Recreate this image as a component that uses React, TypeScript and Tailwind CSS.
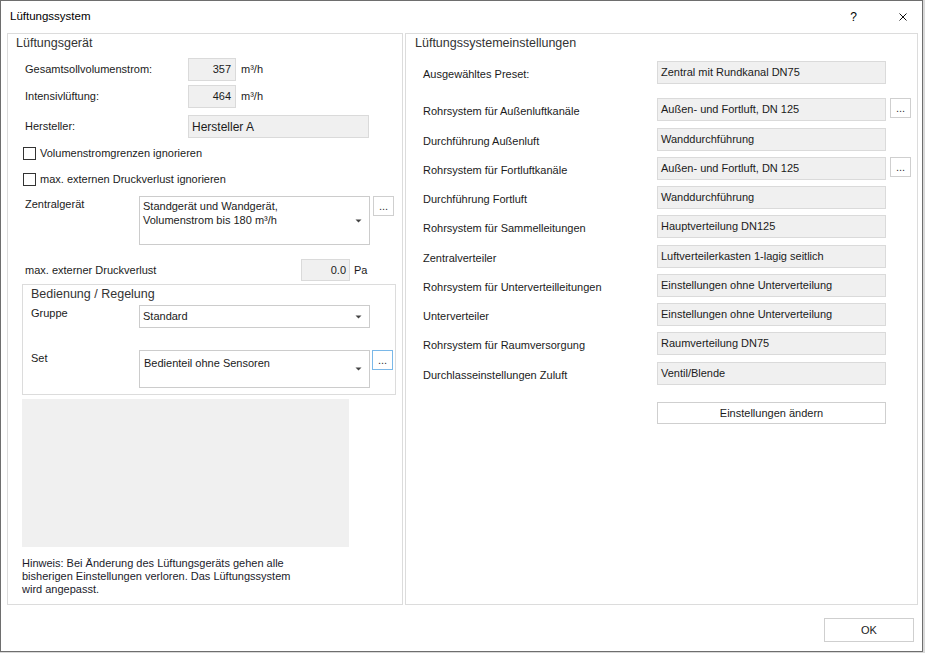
import React from 'react';

const font = "font-['Liberation_Sans',Arial,sans-serif]";

type Row = {
  label: string;
  value: string;
  dots?: boolean;
  mt: string;
};

const settingRows: Row[] = [
  { label: 'Ausgewähltes Preset:', value: 'Zentral mit Rundkanal DN75', mt: 'mt-[10px]' },
  { label: 'Rohrsystem für Außenluftkanäle', value: 'Außen- und Fortluft, DN 125', dots: true, mt: 'mt-[14px]' },
  { label: 'Durchführung Außenluft', value: 'Wanddurchführung', mt: 'mt-[7px]' },
  { label: 'Rohrsystem für Fortluftkanäle', value: 'Außen- und Fortluft, DN 125', dots: true, mt: 'mt-[6px]' },
  { label: 'Durchführung Fortluft', value: 'Wanddurchführung', mt: 'mt-[6px]' },
  { label: 'Rohrsystem für Sammelleitungen', value: 'Hauptverteilung DN125', mt: 'mt-[6px]' },
  { label: 'Zentralverteiler', value: 'Luftverteilerkasten 1-lagig seitlich', mt: 'mt-[7px]' },
  { label: 'Rohrsystem für Unterverteilleitungen', value: 'Einstellungen ohne Unterverteilung', mt: 'mt-[6px]' },
  { label: 'Unterverteiler', value: 'Einstellungen ohne Unterverteilung', mt: 'mt-[6px]' },
  { label: 'Rohrsystem für Raumversorgung', value: 'Raumverteilung DN75', mt: 'mt-[6px]' },
  { label: 'Durchlasseinstellungen Zuluft', value: 'Ventil/Blende', mt: 'mt-[7px]' },
];

function Arrow() {
  return (
    <svg width="7" height="4" viewBox="0 0 7 4" className="shrink-0">
      <polygon points="0.5,0.5 6.5,0.5 3.5,3.5" fill="#444" />
    </svg>
  );
}

function DotsButton({ focused }: { focused?: boolean }) {
  return (
    <div
      className={
        focused
          ? 'flex h-[20px] w-[21px] shrink-0 items-end justify-center border border-[#7ab8e8] bg-white pb-[3px] text-[11px] leading-none text-[#333]'
          : 'flex h-[20px] w-[21px] shrink-0 items-end justify-center border border-[#cfcfcf] bg-white pb-[3px] text-[11px] leading-none text-[#333]'
      }
    >
      ...
    </div>
  );
}

function Checkbox({ label, mt }: { label: string; mt: string }) {
  return (
    <div className={`ml-[15px] flex h-[14px] items-center ${mt}`}>
      <div className="h-[13px] w-[13px] border border-[#333] bg-white" />
      <span className="ml-[4px] text-[11px] leading-[14px] text-[#1b1b1b]">{label}</span>
    </div>
  );
}

function ValueField({ value, width }: { value: string; width: string }) {
  return (
    <div
      className={`flex h-[23px] ${width} items-center justify-end border border-[#dadada] bg-[#f0f0f0] pr-[4px] text-[11px] text-[#1b1b1b]`}
    >
      {value}
    </div>
  );
}

export default function App() {
  return (
    <div className={`h-[653px] w-[925px] bg-[#d9d9d9] ${font}`}>
      <div className="flex h-[652px] w-[923px] flex-col border border-[#6e6e6e] bg-white">
        {/* Title bar */}
        <div className="flex h-[31px] shrink-0 items-center pl-[9px] pr-[15px]">
          <span className="text-[11.5px] text-black">Lüftungssystem</span>
          <span className="ml-auto text-[12px] text-black">?</span>
          <svg width="8" height="8" viewBox="0 0 8 8" className="ml-[42px]">
            <path d="M0.5 0.5 L7.5 7.5 M7.5 0.5 L0.5 7.5" stroke="#111" strokeWidth="1" />
          </svg>
        </div>

        <div className="mt-[1px] flex gap-[2px] pl-[6px]">
          {/* Left group */}
          <div className="flex h-[572px] w-[396px] flex-col border border-[#dcdcdc]">
            <div className="ml-[8px] mt-[2px] h-[15px] text-[12.5px] leading-[15px] text-[#333]">
              Lüftungsgerät
            </div>

            <div className="ml-[17px] mt-[7px] flex items-center">
              <span className="w-[163px] text-[11px] text-[#1b1b1b]">Gesamtsollvolumenstrom:</span>
              <ValueField value="357" width="w-[48px]" />
              <span className="ml-[5px] text-[11px] text-[#1b1b1b]">m³/h</span>
            </div>
            <div className="ml-[17px] mt-[4px] flex items-center">
              <span className="w-[163px] text-[11px] text-[#1b1b1b]">Intensivlüftung:</span>
              <ValueField value="464" width="w-[48px]" />
              <span className="ml-[5px] text-[11px] text-[#1b1b1b]">m³/h</span>
            </div>
            <div className="ml-[17px] mt-[7px] flex items-center">
              <span className="w-[163px] text-[11px] text-[#1b1b1b]">Hersteller:</span>
              <div className="flex h-[23px] w-[181px] items-center border border-[#dadada] bg-[#f0f0f0] pl-[3px] text-[12px] text-[#1b1b1b]">
                Hersteller A
              </div>
            </div>

            <Checkbox label="Volumenstromgrenzen ignorieren" mt="mt-[8px]" />
            <Checkbox label="max. externen Druckverlust ignorieren" mt="mt-[12px]" />

            <div className="ml-[17px] mt-[10px] flex items-start">
              <span className="w-[114px] pt-[1px] text-[11px] leading-[15px] text-[#1b1b1b]">Zentralgerät</span>
              <div className="flex h-[49px] w-[231px] items-center border border-[#cccccc] bg-white pl-[3px] pr-[7px]">
                <div className="flex-1 self-start pt-[2px] text-[11px] leading-[14px] text-[#1b1b1b]">
                  Standgerät und Wandgerät,
                  <br />
                  Volumenstrom bis 180 m³/h
                </div>
                <Arrow />
              </div>
              <div className="ml-[3px]">
                <DotsButton />
              </div>
            </div>

            <div className="ml-[17px] mt-[14px] flex items-center">
              <span className="w-[276px] text-[11px] text-[#1b1b1b]">max. externer Druckverlust</span>
              <div className="flex h-[22px] w-[49px] items-center justify-end border border-[#dadada] bg-[#f0f0f0] pr-[3px] text-[11px] text-[#1b1b1b]">
                0.0
              </div>
              <span className="ml-[4px] text-[11px] text-[#1b1b1b]">Pa</span>
            </div>

            {/* Bedienung / Regelung */}
            <div className="ml-[14px] mt-[3px] flex h-[111px] w-[374px] flex-col border border-[#dcdcdc]">
              <div className="ml-[8px] mt-[2px] h-[15px] text-[12.5px] leading-[15px] text-[#333]">
                Bedienung / Regelung
              </div>
              <div className="ml-[8px] mt-[3px] flex items-start">
                <span className="w-[108px] pt-[1px] text-[11px] leading-[15px] text-[#1b1b1b]">Gruppe</span>
                <div className="flex h-[23px] w-[231px] items-center border border-[#cccccc] bg-white pl-[3px] pr-[7px]">
                  <span className="flex-1 text-[11px] text-[#1b1b1b]">Standard</span>
                  <Arrow />
                </div>
              </div>
              <div className="ml-[8px] mt-[22px] flex items-start">
                <span className="w-[108px] pt-[1px] text-[11px] leading-[15px] text-[#1b1b1b]">Set</span>
                <div className="flex h-[38px] w-[231px] items-center border border-[#cccccc] bg-white pl-[4px] pr-[7px]">
                  <span className="flex-1 self-start pt-[5px] text-[11px] leading-[15px] text-[#1b1b1b]">
                    Bedienteil ohne Sensoren
                  </span>
                  <Arrow />
                </div>
                <div className="ml-[2px]">
                  <DotsButton focused />
                </div>
              </div>
            </div>

            <div className="ml-[14px] mt-[4px] h-[148px] w-[327px] bg-[#f0f0f0]" />

            <p className="ml-[14px] mt-[10px] text-[11px] leading-[13px] text-[#1b1b2b]">
              Hinweis: Bei Änderung des Lüftungsgeräts gehen alle
              <br />
              bisherigen Einstellungen verloren. Das Lüftungssystem
              <br />
              wird angepasst.
            </p>
          </div>

          {/* Right group */}
          <div className="flex h-[572px] w-[513px] flex-col border border-[#dcdcdc]">
            <div className="ml-[9px] mt-[2px] h-[15px] text-[12.5px] leading-[15px] text-[#333]">
              Lüftungssystemeinstellungen
            </div>

            {settingRows.map((row) => (
              <div key={row.label + row.mt + row.value} className={`ml-[17px] flex items-center ${row.mt}`}>
                <span className="w-[234px] pt-[4px] text-[11px] text-[#1b1b1b]">{row.label}</span>
                <div className="h-[23px] w-[229px] border border-[#dadada] bg-[#f0f0f0] pl-[3px] pt-[3px] text-[11px] leading-[15px] text-[#1b1b1b]">
                  {row.value}
                </div>
                {row.dots && (
                  <div className="ml-[4px] self-start">
                    <DotsButton />
                  </div>
                )}
              </div>
            ))}

            <div className="ml-[251px] mt-[17px] flex h-[22px] w-[229px] items-center justify-center border border-[#cfcfcf] bg-white text-[11px] text-[#1b1b1b]">
              Einstellungen ändern
            </div>
          </div>
        </div>

        <div className="mt-[13px] flex justify-end pr-[8px]">
          <div className="flex h-[24px] w-[90px] items-center justify-center border border-[#cfcfcf] bg-white text-[11px] text-[#1b1b1b]">
            OK
          </div>
        </div>
      </div>
    </div>
  );
}
